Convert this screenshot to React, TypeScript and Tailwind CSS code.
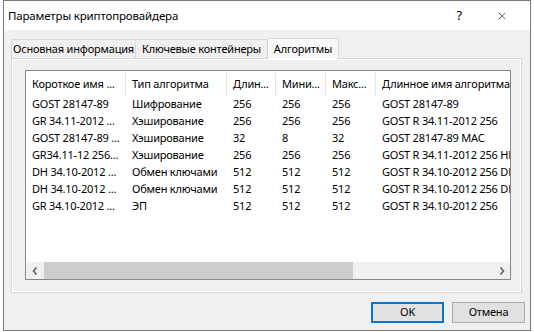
import { X } from "lucide-react";

const font = { fontFamily: '"Noto Sans", "Liberation Sans", sans-serif' };

const columns = [
  { title: "Короткое имя ...", w: "w-[100px]" },
  { title: "Тип алгоритма", w: "w-[101px]" },
  { title: "Длин...", w: "w-[49px]" },
  { title: "Мини...", w: "w-[50px]" },
  { title: "Макс...", w: "w-[50px]" },
  { title: "Длинное имя алгоритма", w: "w-[160px]" },
];

const rows = [
  ["GOST 28147-89", "Шифрование", "256", "256", "256", "GOST 28147-89"],
  ["GR 34.11-2012 ...", "Хэширование", "256", "256", "256", "GOST R 34.11-2012 256"],
  ["GOST 28147-89 ...", "Хэширование", "32", "8", "32", "GOST 28147-89 MAC"],
  ["GR34.11-12 256...", "Хэширование", "256", "256", "256", "GOST R 34.11-2012 256 HMAC"],
  ["DH 34.10-2012 ...", "Обмен ключами", "512", "512", "512", "GOST R 34.10-2012 256 DH"],
  ["DH 34.10-2012 ...", "Обмен ключами", "512", "512", "512", "GOST R 34.10-2012 256 DH"],
  ["GR 34.10-2012 ...", "ЭП", "512", "512", "512", "GOST R 34.10-2012 256"],
];

const Chevron = ({ dir }: { dir: "left" | "right" }) => (
  <svg width="6" height="8" viewBox="0 0 6 8">
    <path
      d={dir === "left" ? "M4.5 0.5 L1.5 4 L4.5 7.5" : "M1.5 0.5 L4.5 4 L1.5 7.5"}
      stroke="#606060"
      strokeWidth="1.6"
      fill="none"
    />
  </svg>
);

export default function App() {
  return (
    <div className="w-[534px] h-[332px] bg-white text-[11px] tracking-[-0.2px] text-black" style={font}>
      <div className="ml-[3px] w-[528px] h-[331px] border border-[#7a7a7a] flex flex-col bg-[#f0f0f0]">
        {/* title bar */}
        <div className="h-[29px] bg-white flex items-center shrink-0">
          <span className="ml-[4px] text-[11.5px] tracking-[-0.15px] whitespace-nowrap">Параметры криптопровайдера</span>
          <span className="ml-auto mr-[34px] text-[13px]">?</span>
          <X className="w-[12px] h-[12px] mr-[22px]" strokeWidth={1.2} />
        </div>

        {/* tabs */}
        <div className="flex items-end h-[27px] pl-[7px] mt-[1px] whitespace-nowrap">
          <div className="w-[125px] h-[19px] border border-b-0 border-[#d9d9d9] flex items-center justify-center">
            Основная информация
          </div>
          <div className="w-[132px] h-[19px] border border-l-0 border-b-0 border-[#d9d9d9] flex items-center justify-center">
            Ключевые контейнеры
          </div>
          <div className="w-[71px] h-[21px] border border-l-0 border-b-0 border-[#d9d9d9] bg-[#f9f9f9] flex items-center justify-center relative z-10 -mb-px">
            Алгоритмы
          </div>
        </div>

        {/* panel */}
        <div className="ml-[7px] w-[511px] h-[235px] border border-[#d9d9d9] shadow-[inset_1px_1px_0_#fff,inset_-1px_-1px_0_#fff] pl-[13px] pt-[11px] pr-[11px]">
          <div className="w-[486px] h-[210px] border border-[#828790] bg-white flex flex-col overflow-hidden">
            {/* header */}
            <div className="flex h-[25px] items-end shrink-0">
              {columns.map((c, i) => (
                <div
                  key={i}
                  className={`${c.w} h-[23px] shrink-0 pl-[6px] flex items-center whitespace-nowrap ${i < 5 ? "border-r border-[#e5e5e5]" : ""}`}
                >
                  {c.title}
                </div>
              ))}
            </div>
            {/* rows */}
            {rows.map((r, ri) => (
              <div key={ri} className="flex h-[17px] items-center shrink-0">
                {r.map((cell, ci) => (
                  <div key={ci} className={`${columns[ci].w} shrink-0 pl-[6px] whitespace-nowrap overflow-hidden`}>
                    {cell}
                  </div>
                ))}
              </div>
            ))}
            <div className="flex-1" />
            {/* horizontal scrollbar */}
            <div className="h-[17px] flex bg-[#f0f0f0] shrink-0">
              <div className="w-[17px] flex items-center justify-center">
                <Chevron dir="left" />
              </div>
              <div className="w-[309px] ml-px bg-[#cdcdcd]" />
              <div className="flex-1" />
              <div className="w-[17px] flex items-center justify-center">
                <Chevron dir="right" />
              </div>
            </div>
          </div>
        </div>

        {/* buttons */}
        <div className="flex justify-end gap-[8px] mt-[9px] pr-[5px]">
          <button className="w-[73px] h-[21px] border-2 border-[#0078d7] bg-[#e1e1e1] flex items-center justify-center">
            OK
          </button>
          <button className="w-[73px] h-[21px] border border-[#adadad] bg-[#e1e1e1] flex items-center justify-center">
            Отмена
          </button>
        </div>
      </div>
    </div>
  );
}
